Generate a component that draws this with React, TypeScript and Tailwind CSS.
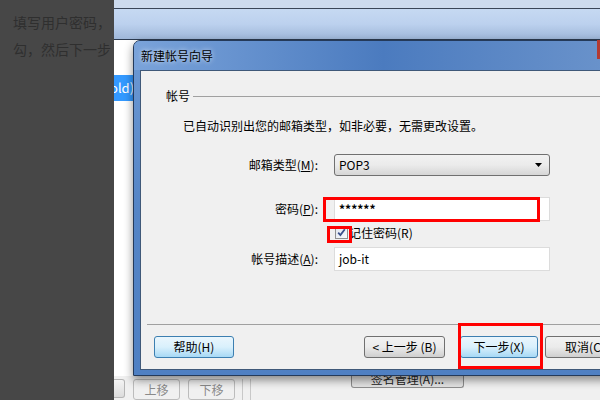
import React from "react";

const btnGray =
  "h-[22px] flex items-center justify-center rounded-[3px] border border-[#707070] bg-gradient-to-b from-[#f2f2f2] via-[#ebebeb] to-[#cfcfcf] text-[12px] text-black";
const btnBlue =
  "h-[22px] flex items-center justify-center rounded-[3px] border border-[#3c7fb1] bg-gradient-to-b from-[#eaf6fd] via-[#d9f0fc] to-[#a7d9f5] text-[12px] text-black";

const Field = ({ label, children }: { label: React.ReactNode; children: React.ReactNode }) => (
  <div className="flex items-center">
    <div className="w-[177px] text-right text-[12px] text-black">{label}</div>
    <div className="ml-[16px] w-[216px]">{children}</div>
  </div>
);

const App = () => {
  return (
    <div className="w-[600px] h-[400px] flex overflow-hidden font-[family-name:'Noto_Sans_CJK_SC',sans-serif]">
      {/* dimmed page on the left */}
      <div className="w-[114px] shrink-0 bg-[#474747] pt-[9px] pl-[13px] text-[14px] leading-[27px] text-[#2f2f2f] whitespace-nowrap overflow-hidden">
        <p>填写用户密码，</p>
        <p>勾，然后下一步</p>
      </div>

      {/* mail client behind the dialog */}
      <div className="relative flex-1 flex flex-col bg-[#f0f0f0]">
        <div className="h-[8px] bg-[#cddbee]" />
        <div className="h-[1px] bg-[#3a4658]" />
        <div className="h-[30px] bg-gradient-to-b from-[#c6d9f2] via-[#bcd1ee] to-[#9fb7d9]" />
        <div className="h-[1px] bg-[#2d3b50]" />
        <div className="flex-1 flex">
          <div className="w-[19px] bg-white pt-[35px]">
            <div className="h-[26px] bg-[#3399ff] text-[13px] leading-[26px] text-white overflow-hidden whitespace-nowrap">
              <span className="block -ml-[4px]">old)</span>
            </div>
          </div>
          <div className="flex-1 bg-white" />
        </div>
        <div className="h-[24px] flex items-start pt-[3px] bg-[#f0f0f0] text-[12px] text-[#8a8a8a]">
          <div className="w-[11px] h-[19px] rounded-r-[3px] border border-l-0 border-[#b5b5b5] bg-gradient-to-b from-[#f4f4f4] to-[#dcdcdc]" />
          <div className="ml-[8px] w-[47px] h-[21px] rounded-[3px] border border-[#bcbcbc] flex items-center justify-center">上移</div>
          <div className="ml-[8px] w-[47px] h-[21px] rounded-[3px] border border-[#bcbcbc] flex items-center justify-center">下移</div>
          <div className="ml-[7px] w-px h-[21px] bg-[#c8c8c8]" />
          <div className="ml-[7px] w-px h-[21px] bg-[#c8c8c8]" />
          <div className="ml-[100px] -mt-[6px] w-[113px] h-[15px] rounded-b-[3px] border border-t-0 border-[#8e8e8e] bg-[#e4e4e4] text-[12px] leading-[12px] text-[#222] text-center overflow-hidden">
            签名管理(A)...
          </div>
        </div>

        {/* wizard dialog */}
        <div className="absolute left-[19px] top-[40px] w-[500px] h-[336px] flex flex-col rounded-tl-[7px] border border-[#243a5a] bg-gradient-to-b from-[#6e9ad4] via-[#5585c6] to-[#4f80c3] shadow-[0_4px_10px_rgba(0,0,0,0.45)]">
          <div className="h-[29px] shrink-0 flex items-center pl-[7px] bg-gradient-to-r from-[#7aa3da] via-[#4b7bbf] to-[#6d95cc] rounded-tl-[6px]">
            <span className="text-[12px] text-black [text-shadow:0_0_5px_rgba(255,255,255,0.9)]">新建帐号向导</span>
          </div>
          <div className="flex-1 ml-[6px] mb-[5px] border border-[#3f5878] bg-[#f0f0f0] relative flex flex-col">
            {/* group header */}
            <div className="mt-[17px] flex items-center">
              <span className="ml-[25px] text-[12px] leading-[16px] text-black">帐号</span>
              <div className="ml-[3px] flex-1 h-px bg-[#a0a0a0]" />
            </div>
            <p className="mt-[14px] ml-[42px] text-[12px] leading-[16px] text-black whitespace-nowrap">
              已自动识别出您的邮箱类型，如非必要，无需更改设置。
            </p>

            <div className="mt-[20px]">
              <Field
                label={
                  <>
                    邮箱类型(<span className="underline">M</span>):
                  </>
                }
              >
                <div className="h-[22px] rounded-[3px] border border-[#707070] bg-gradient-to-b from-[#f2f2f2] via-[#ebebeb] to-[#d6d6d6] flex items-center justify-between pl-[4px] pr-[7px]">
                  <span className="text-[12px] text-black">POP3</span>
                  <svg width="7" height="4" viewBox="0 0 7 4">
                    <path d="M0 0h7L3.5 4z" fill="#000" />
                  </svg>
                </div>
              </Field>
            </div>

            <div className="mt-[21px]">
              <Field
                label={
                  <>
                    密码(<span className="underline">P</span>):
                  </>
                }
              >
                <div className="h-[24px] border border-[#dcdcdc] bg-white flex items-center pl-[4px] text-[12px] font-bold text-black">
                  ******
                </div>
              </Field>
            </div>

            <div className="mt-[5px] flex items-center pl-[194px] h-[13px]">
              <div className="w-[13px] h-[13px] border border-[#8f8f8f] bg-gradient-to-br from-[#e0e6ef] to-[#f7f9fc] flex items-center justify-center">
                <svg width="9" height="9" viewBox="0 0 9 9">
                  <path d="M1.2 4.6 3.4 7 7.8 1.2" fill="none" stroke="#3a4f8a" strokeWidth="1.8" />
                </svg>
              </div>
              <span className="ml-[1px] text-[12px] text-black">记住密码(R)</span>
            </div>

            <div className="mt-[8px]">
              <Field
                label={
                  <>
                    帐号描述(<span className="underline">A</span>):
                  </>
                }
              >
                <div className="h-[24px] border border-[#dcdcdc] bg-white flex items-center pl-[4px] text-[12px] text-black">
                  job-it
                </div>
              </Field>
            </div>

            <div className="mt-[53px] ml-[6px] h-px bg-[#a0a0a0]" />

            <div className="mt-[11px] flex">
              <div className={`${btnBlue} ml-[13px] w-[80px]`}>帮助(H)</div>
              <div className={`${btnGray} ml-[130px] w-[81px]`}>&lt; 上一步 (B)</div>
              <div className={`${btnBlue} ml-[15px] w-[78px]`}>下一步(X)</div>
              <div className={`${btnGray} ml-[7px] w-[80px]`}>取消(C)</div>
            </div>

            {/* red annotations */}
            <div className="absolute left-[182px] top-[126px] w-[217px] h-[25px] border-[3px] border-[#ff0000]" />
            <div className="absolute left-[186px] top-[155px] w-[25px] h-[17px] border-[3px] border-[#ff0000]" />
            <div className="absolute left-[317px] top-[252px] w-[85px] h-[46px] border-[3px] border-[#ff0000]" />
          </div>
        </div>
        {/* close button corner */}
        <div className="absolute right-0 top-[40px] w-[3px] h-[19px] bg-[#b33a32]" />
      </div>
    </div>
  );
};

export default App;
